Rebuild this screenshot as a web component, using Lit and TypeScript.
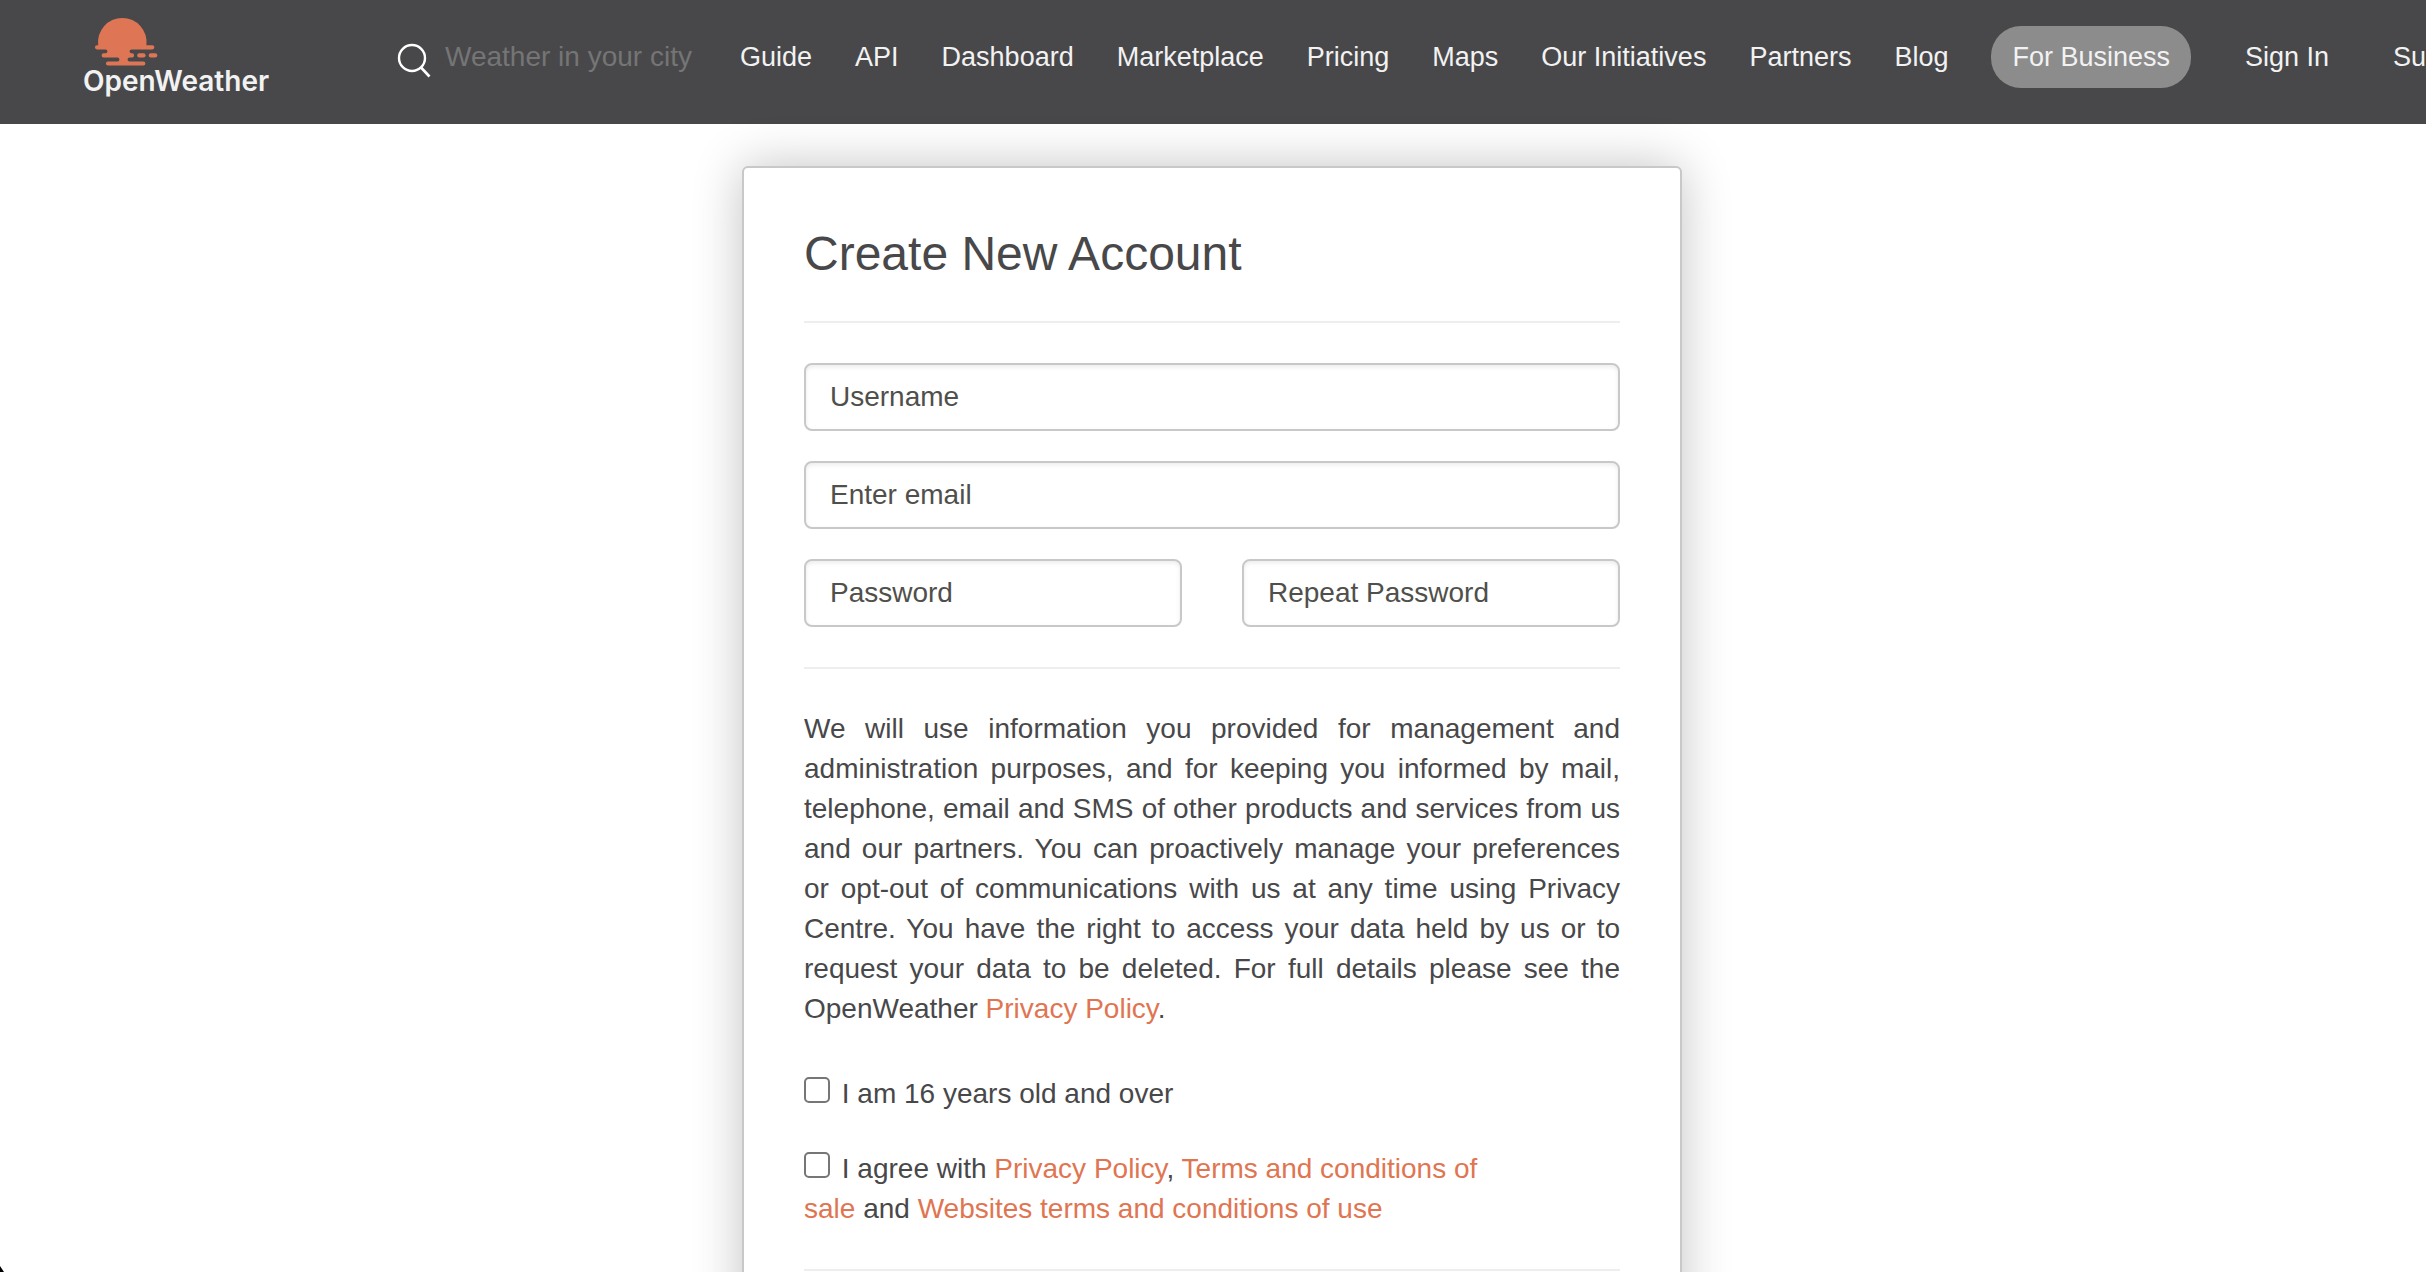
import { LitElement, html, css, svg } from "lit";
import { customElement, property } from "lit/decorators.js";

const NAV_LINKS = [
  "Guide",
  "API",
  "Dashboard",
  "Marketplace",
  "Pricing",
  "Maps",
  "Our Initiatives",
  "Partners",
  "Blog",
];

@customElement("ow-logo")
export class OwLogo extends LitElement {
  static styles = css`
    :host {
      display: block;
    }
    .link {
      display: flex;
      flex-direction: column;
      color: #f2f2f2;
      text-decoration: none;
    }
    .sun {
      display: block;
      width: 64px;
      height: 49px;
      margin-left: 11px;
    }
    .name {
      font: 600 28px/30px Inter, "Liberation Sans", sans-serif;
    }
  `;

  render() {
    return html`
      <a class="link" href="#home">
        <svg class="sun" viewBox="0 0 64 49" aria-hidden="true">
          ${svg`<g fill="#de7655">
            <path d="M4.2 28.3A24.3 24.3 0 1 1 52.400 28.3H58.300a2 2 0 0 1 0 4.100H37.500a1.950 1.950 0 0 0 0 3.900H38a2 2 0 0 1 0 4.200H35.500a1.950 1.950 0 0 0 0 3.900H49.300a2 2 0 0 1 0 4.200H14a2 2 0 0 1 0-4.200H23.500a1.950 1.950 0 0 0 0-3.900H9.700a2 2 0 0 1 0-4.200H11.500a1.950 1.950 0 0 0 0-3.900H3a2 2 0 0 1 0-4.100Z"/>
            <rect x="43.200" y="36.300" width="8.400" height="4.200" rx="2.100"/>
            <rect x="54.700" y="36.300" width="8.600" height="4.200" rx="2.100"/>
          </g>`}
        </svg>
        <span class="name">OpenWeather</span>
      </a>
    `;
  }
}

@customElement("ow-header")
export class OwHeader extends LitElement {
  static styles = css`
    :host {
      display: block;
      background: #48484a;
      color: #f2f2f2;
      overflow: hidden;
    }
    .bar {
      display: flex;
      align-items: flex-start;
      height: 124px;
      padding-left: 83px;
      box-sizing: border-box;
      white-space: nowrap;
    }
    .logo {
      flex: none;
      width: 314px;
      padding-top: 17px;
    }
    .search {
      display: flex;
      align-items: center;
      flex: none;
      width: 343px;
      height: 62px;
      margin-top: 26px;
    }
    .search-icon {
      flex: none;
      width: 36px;
      height: 36px;
      margin: 6px 12px 0 0;
    }
    .search-input {
      width: 260px;
      padding: 0;
      border: 0;
      outline: 0;
      background: none;
      color: #f2f2f2;
      font: 28px/40px "Liberation Sans", Arial, sans-serif;
    }
    .search-input::placeholder {
      color: #757575;
      opacity: 1;
    }
    .nav {
      display: flex;
      flex: none;
      gap: 43px;
      margin-top: 26px;
    }
    .item {
      color: inherit;
      font-size: 27px;
      line-height: 62px;
      text-decoration: none;
    }
    .pill {
      padding: 0 21px;
      border-radius: 30px;
      background: #8c8c8c;
    }
    .account {
      display: flex;
      flex: none;
      gap: 64px;
      margin: 26px 0 0 54px;
    }
  `;

  render() {
    return html`
      <header class="bar">
        <ow-logo class="logo"></ow-logo>
        <form class="search" role="search">
          <svg class="search-icon" viewBox="0 0 36 36" aria-hidden="true">
            <circle cx="15" cy="16" r="13" fill="none" stroke="#fff" stroke-width="2.400" />
            <path d="M24 25.500L32.500 34.500" stroke="#fff" stroke-width="2.600" />
          </svg>
          <input
            class="search-input"
            type="text"
            aria-label="Weather in your city"
            placeholder="Weather in your city"
          />
        </form>
        <nav class="nav">
          ${NAV_LINKS.map((name) => html`<a class="item" href="#">${name}</a>`)}
          <a class="item pill" href="#">For Business</a>
        </nav>
        <div class="account">
          <a class="item" href="#">Sign In</a>
          <a class="item" href="#">Support</a>
        </div>
      </header>
    `;
  }
}

@customElement("ow-field")
export class OwField extends LitElement {
  @property() label = "";
  @property() type = "text";

  static styles = css`
    :host {
      display: block;
      min-width: 0;
    }
    .input {
      display: block;
      box-sizing: border-box;
      width: 100%;
      height: 68px;
      padding: 0 24px;
      border: 2px solid #c8c8c8;
      border-radius: 8px;
      outline: 0;
      background: #fff;
      box-shadow: inset 0 2px 4px rgba(0, 0, 0, 0.08);
      color: #4f4f4b;
      font: 28px/40px "Liberation Sans", Arial, sans-serif;
    }
    .input::placeholder {
      color: #4f4f4b;
      opacity: 1;
    }
  `;

  render() {
    return html`<input
      class="input"
      type=${this.type}
      aria-label=${this.label}
      placeholder=${this.label}
    />`;
  }
}

@customElement("ow-sign-up")
export class OwSignUp extends LitElement {
  static styles = css`
    :host {
      display: block;
      box-sizing: border-box;
      width: 100%;
      max-width: 940px;
      padding: 60px;
      border: 2px solid #c8c8c8;
      border-radius: 6px;
      background: #fff;
      box-shadow: 0 0 50px rgba(0, 0, 0, 0.24);
    }
    .title {
      margin: 0;
      padding-bottom: 2px;
      font-size: 48px;
      font-weight: 400;
      line-height: 51px;
    }
    .rule {
      height: 2px;
      margin: 40px 0;
      border: 0;
      background: #eee;
    }
    .fields {
      display: grid;
      grid-template-columns: 1fr 1fr;
      gap: 30px 60px;
    }
    .wide {
      grid-column: 1 / -1;
    }
    .notice {
      margin: 0;
      text-align: justify;
    }
    .consents {
      display: flex;
      flex-direction: column;
      align-items: flex-start;
      gap: 35px;
      max-width: 700px;
      margin-top: 45px;
    }
    .check {
      appearance: none;
      box-sizing: border-box;
      width: 26px;
      height: 26px;
      margin: 0 4px 0 0;
      border: 2px solid #767676;
      border-radius: 5px;
      background: #fff;
    }
    .check:checked {
      background: #de7655;
    }
    .link {
      color: #e07552;
      text-decoration: none;
    }
  `;

  render() {
    return html`
      <form>
        <h1 class="title">Create New Account</h1>
        <hr class="rule" />
        <div class="fields">
          <ow-field class="wide" label="Username"></ow-field>
          <ow-field class="wide" label="Enter email" type="email"></ow-field>
          <ow-field label="Password" type="password"></ow-field>
          <ow-field label="Repeat Password" type="password"></ow-field>
        </div>
        <hr class="rule" />
        <p class="notice">
          We will use information you provided for management and administration
          purposes, and for keeping you informed by mail, telephone, email and
          SMS of other products and services from us and our partners. You can
          proactively manage your preferences or opt-out of communications with
          us at any time using Privacy Centre. You have the right to access your
          data held by us or to request your data to be deleted. For full
          details please see the OpenWeather
          <a class="link" href="#">Privacy Policy</a>.
        </p>
        <div class="consents">
          <label>
            <input class="check" type="checkbox" />
            I am 16 years old and over
          </label>
          <label>
            <input class="check" type="checkbox" />
            I agree with <a class="link" href="#">Privacy Policy</a>,
            <a class="link" href="#">Terms and conditions of sale</a> and
            <a class="link" href="#">Websites terms and conditions of use</a>
          </label>
        </div>
        <hr class="rule" />
      </form>
    `;
  }
}

@customElement("app-root")
export class AppRoot extends LitElement {
  static styles = css`
    :host {
      display: block;
      position: relative;
      height: 100vh;
      overflow: hidden;
      background: #fff;
      color: #48484a;
      font: 28px/40px "Liberation Sans", Arial, sans-serif;
    }
    .main {
      display: flex;
      justify-content: center;
      padding: 42px 2px 60px 0;
    }
    .corner {
      position: absolute;
      left: 0;
      bottom: 0;
      width: 4px;
      height: 6px;
      background: #000;
      clip-path: polygon(0 0, 100% 100%, 0 100%);
    }
  `;

  render() {
    return html`
      <ow-header></ow-header>
      <main class="main"><ow-sign-up></ow-sign-up></main>
      <div class="corner"></div>
    `;
  }
}
